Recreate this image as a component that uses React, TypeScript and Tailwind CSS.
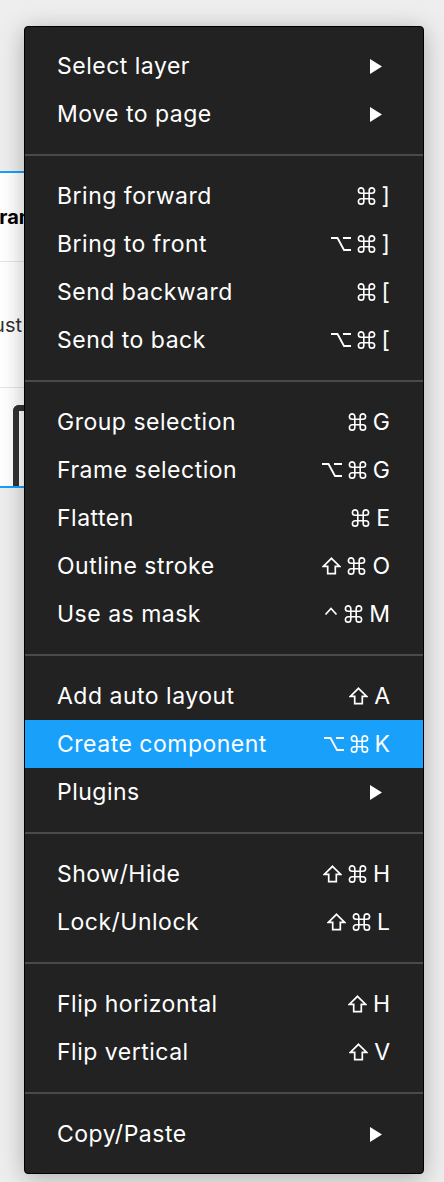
import { ReactNode } from 'react'

type Item = { label: string; keys?: string[]; sub?: boolean; active?: boolean }

const groups: Item[][] = [
  [
    { label: 'Select layer', sub: true },
    { label: 'Move to page', sub: true },
  ],
  [
    { label: 'Bring forward', keys: ['cmd', ']'] },
    { label: 'Bring to front', keys: ['opt', 'cmd', ']'] },
    { label: 'Send backward', keys: ['cmd', '['] },
    { label: 'Send to back', keys: ['opt', 'cmd', '['] },
  ],
  [
    { label: 'Group selection', keys: ['cmd', 'G'] },
    { label: 'Frame selection', keys: ['opt', 'cmd', 'G'] },
    { label: 'Flatten', keys: ['cmd', 'E'] },
    { label: 'Outline stroke', keys: ['shift', 'cmd', 'O'] },
    { label: 'Use as mask', keys: ['ctrl', 'cmd', 'M'] },
  ],
  [
    { label: 'Add auto layout', keys: ['shift', 'A'] },
    { label: 'Create component', keys: ['opt', 'cmd', 'K'], active: true },
    { label: 'Plugins', sub: true },
  ],
  [
    { label: 'Show/Hide', keys: ['shift', 'cmd', 'H'] },
    { label: 'Lock/Unlock', keys: ['shift', 'cmd', 'L'] },
  ],
  [
    { label: 'Flip horizontal', keys: ['shift', 'H'] },
    { label: 'Flip vertical', keys: ['shift', 'V'] },
  ],
  [{ label: 'Copy/Paste', sub: true }],
]

function SubArrow() {
  return (
    <svg width="12" height="15" viewBox="0 0 12 15" className="block">
      <path d="M0 0 L12 7.5 L0 15 Z" fill="#ffffff" />
    </svg>
  )
}

function Key({ k }: { k: string }) {
  if (k === 'cmd')
    return (
      <svg width="19" height="18" viewBox="-1 -1 20 20" className="block">
        <path
          d="M6 6 V3 A3 3 0 1 0 3 6 H15 A3 3 0 1 0 12 3 V15 A3 3 0 1 0 15 12 H3 A3 3 0 1 0 6 15 Z"
          fill="none"
          stroke="#ffffff"
          strokeWidth="1.8"
        />
      </svg>
    )
  if (k === 'opt')
    return (
      <svg width="20" height="16" viewBox="0 0 20 16" className="block">
        <path d="M0 2 H6.5 L13 14 H20 M12 2 H20" fill="none" stroke="#ffffff" strokeWidth="1.8" />
      </svg>
    )
  if (k === 'shift')
    return (
      <svg width="19" height="18" viewBox="0 0 19 18" className="block">
        <path
          d="M9.5 1.3 L17.7 9.3 H13.3 V16.6 H5.7 V9.3 H1.3 Z"
          fill="none"
          stroke="#ffffff"
          strokeWidth="1.7"
          strokeLinejoin="miter"
        />
      </svg>
    )
  if (k === 'ctrl')
    return (
      <svg width="14" height="18" viewBox="0 0 14 18" className="block">
        <path d="M1.5 9.5 L7 3.5 L12.5 9.5" fill="none" stroke="#ffffff" strokeWidth="1.7" />
      </svg>
    )
  return <span className="leading-none">{k}</span>
}

function Shortcut({ keys }: { keys: string[] }) {
  return (
    <span className="flex items-center gap-[6px]">
      {keys.map((k, i) => (
        <Key key={i} k={k} />
      ))}
    </span>
  )
}

function Row({ item }: { item: Item }) {
  let right: ReactNode = null
  if (item.sub) right = <SubArrow />
  else if (item.keys) right = <Shortcut keys={item.keys} />

  return (
    <div
      className={
        'flex h-[48px] items-center justify-between pl-[32px] ' +
        (item.sub ? 'pr-[41px] ' : 'pr-[33px] ') +
        (item.active ? 'bg-[#18a0fb]' : '')
      }
    >
      <span className="tracking-[0.5px]">{item.label}</span>
      {right}
    </div>
  )
}

export default function App() {
  return (
    <div className="relative h-[1182px] w-[444px] overflow-hidden bg-[#eeeeee] font-['Inter',sans-serif]">
      {/* page underneath the menu */}
      <div className="pt-[171px]">
        <div className="w-[140px] border-y-2 border-[#18a0fb] bg-white">
          <div className="flex h-[89px] items-center border-b border-[#e5e5e5]">
            <span className="-ml-[12px] text-[20px] font-bold text-black">Frame</span>
          </div>
          <div className="flex h-[126px] items-center border-b border-[#e5e5e5]">
            <div className="flex w-[22px] justify-end whitespace-nowrap">
              <span className="text-[20px] text-[#333]">Adjust</span>
            </div>
          </div>
          <div className="h-[98px] pl-[13px] pt-[17px]">
            <div className="h-full w-[60px] rounded-t-[6px] border-x-[6px] border-t-[6px] border-[#333]" />
          </div>
        </div>
      </div>

      {/* context menu */}
      <div className="absolute left-[24px] top-[26px] w-[400px] rounded-[4px] border border-black bg-[#222222] py-[15px] text-[23px] text-white shadow-[0_4px_24px_rgba(0,0,0,0.28)]">
        {groups.map((g, gi) => (
          <div key={gi}>
            {gi > 0 && <div className="my-[16px] h-[2px] bg-[#4a4a4a]" />}
            {g.map((item) => (
              <Row key={item.label} item={item} />
            ))}
          </div>
        ))}
      </div>
    </div>
  )
}
